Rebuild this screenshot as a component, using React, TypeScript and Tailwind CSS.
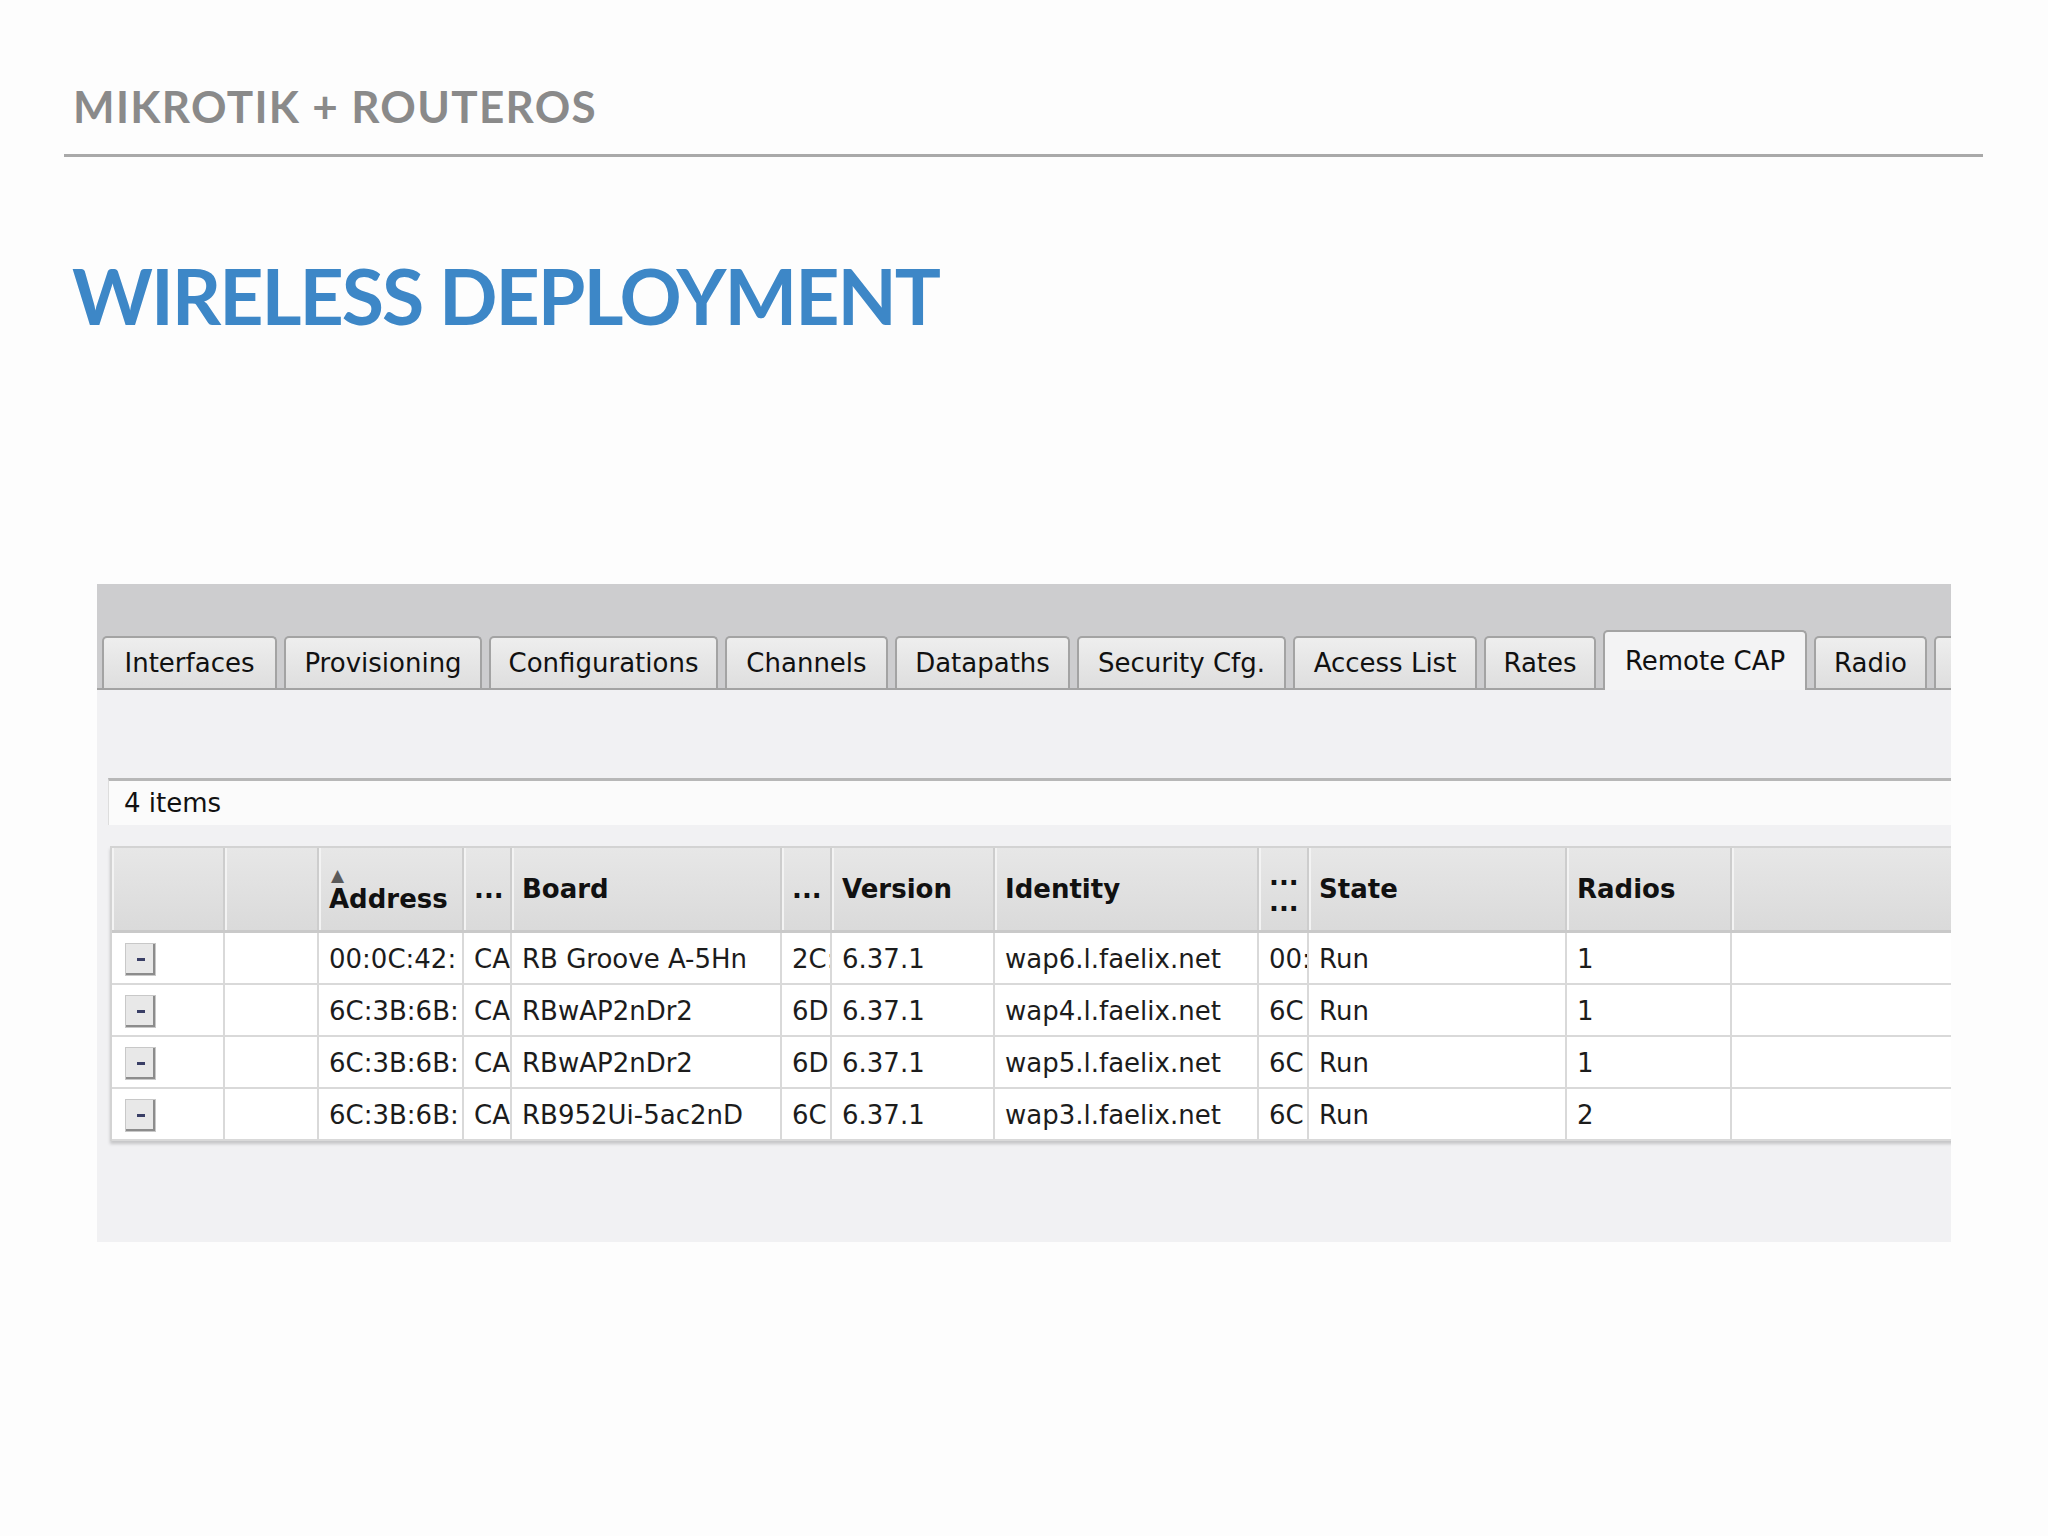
import React from 'react';

// WebFig "Remote CAP" tab strip
const tabs = [
  { label: 'Interfaces', w: 'w-[175px]' },
  { label: 'Provisioning', w: 'w-[198px]' },
  { label: 'Configurations', w: 'w-[229px]' },
  { label: 'Channels', w: 'w-[163px]' },
  { label: 'Datapaths', w: 'w-[175px]' },
  { label: 'Security Cfg.', w: 'w-[209px]' },
  { label: 'Access List', w: 'w-[184px]' },
  { label: 'Rates', w: 'w-[112px]' },
  { label: 'Remote CAP', w: 'w-[204px]', active: true },
  { label: 'Radio', w: 'w-[113px]' },
  { label: '', w: 'w-[60px]' },
];

// columns are narrow in the original, values are cut at the cell edge
const rows = [
  ['00:0C:42:', 'CA', 'RB Groove A-5Hn', '2C:', '6.37.1', 'wap6.l.faelix.net', '00:', 'Run', '1'],
  ['6C:3B:6B:', 'CA', 'RBwAP2nDr2', '6D', '6.37.1', 'wap4.l.faelix.net', '6C', 'Run', '1'],
  ['6C:3B:6B:', 'CA', 'RBwAP2nDr2', '6D', '6.37.1', 'wap5.l.faelix.net', '6C', 'Run', '1'],
  ['6C:3B:6B:', 'CA', 'RB952Ui-5ac2nD', '6C', '6.37.1', 'wap3.l.faelix.net', '6C', 'Run', '2'],
];

const cols =
  'grid grid-cols-[113px_94px_145px_48px_270px_50px_163px_264px_50px_258px_165px_400px]';

const headCell =
  'flex h-[82px] items-center border-r-2 border-[#cdcdcd] bg-gradient-to-b from-[#e7e7e7] to-[#dadada] px-[10px] shadow-[inset_2px_0_0_#f3f3f3] font-bold text-[26px] text-[#111]';

const bodyCell =
  'flex h-[52px] items-center overflow-hidden whitespace-nowrap border-r-2 border-b-2 border-[#d9d9d9] bg-white pl-[10px] pt-[2px] text-[26px] text-[#1c1c1c]';

function MinusButton() {
  return (
    <div className="flex h-[33px] w-[31px] items-center justify-center border border-[#c8c8c8] bg-[#e8e8e8] shadow-[inset_-2px_-2px_0_#8c8c8c]">
      <div className="h-[3px] w-[8px] bg-[#3a3f66]" />
    </div>
  );
}

export default function App() {
  return (
    <div className="h-[1536px] w-[2048px] overflow-hidden bg-[#fdfdfd] font-['DejaVu_Sans',sans-serif]">
      {/* slide header */}
      <div className="pl-[73px] pt-[84px] font-['Lato',sans-serif] text-[44px] font-bold leading-none tracking-[0.03em] text-[#8a8a8a]">
        MIKROTIK + ROUTEROS
      </div>
      <div className="ml-[64px] mt-[26px] h-[3px] w-[1919px] bg-[#a9a9a9]" />
      <h1 className="ml-[72px] mt-[100px] font-['Lato',sans-serif] text-[77px] font-bold leading-none tracking-[-2px] text-[#3d87c7]">
        WIRELESS DEPLOYMENT
      </h1>

      {/* screenshot panel */}
      <div className="ml-[97px] mt-[250px] flex h-[658px] w-[1854px] flex-col overflow-hidden">
        <div className="flex h-[106px] shrink-0 items-end gap-[7px] border-b-2 border-[#a3a3a3] bg-[#cdcdcf] pl-[5px]">
          {tabs.map((t, i) =>
            t.active ? (
              <div
                key={i}
                className={`relative -mb-[2px] flex h-[60px] shrink-0 items-center justify-center rounded-t-[5px] border-2 border-b-0 border-[#a3a3a3] bg-[#f3f3f4] text-[26px] text-[#111] ${t.w}`}
              >
                {t.label}
              </div>
            ) : (
              <div
                key={i}
                className={`flex h-[52px] shrink-0 items-center justify-center rounded-t-[5px] border-2 border-b-0 border-[#a3a3a3] bg-gradient-to-b from-[#eeeeee] to-[#dedede] text-[26px] text-[#111] ${t.w}`}
              >
                {t.label}
              </div>
            )
          )}
        </div>

        <div className="flex-1 bg-[#f1f1f3] pl-[11px] pt-[88px]">
          <div className="flex h-[47px] items-center border-l border-t-[3px] border-[#b7b7b7] border-l-[#dddddd] bg-[#fbfbfb] pl-[15px] text-[26px] text-[#111]">
            4 items
          </div>

          {/* remote cap table */}
          <div className="ml-[2px] mt-[21px] w-[1900px] border-l-2 border-t-2 border-[#d3d3d3] shadow-[0_3px_3px_rgba(0,0,0,0.18)]">
            <div className={`${cols} border-b-[3px] border-[#c9c9c9]`}>
              <div className={headCell} />
              <div className={headCell} />
              <div className={`${headCell} flex-col items-start justify-center`}>
                <span className="pl-[2px] text-[17px] leading-[20px] text-[#5a5a5a]">▲</span>
                <span className="leading-[28px]">Address</span>
              </div>
              <div className={`${headCell} px-[8px]`}>...</div>
              <div className={headCell}>Board</div>
              <div className={`${headCell} px-[8px]`}>...</div>
              <div className={headCell}>Version</div>
              <div className={headCell}>Identity</div>
              <div className={`${headCell} flex-col items-start justify-center gap-[2px] px-[8px] leading-[24px]`}>
                <span>...</span>
                <span>...</span>
              </div>
              <div className={headCell}>State</div>
              <div className={headCell}>Radios</div>
              <div className={headCell} />
            </div>

            {rows.map((r, i) => (
              <div key={i} className={cols}>
                <div className={`${bodyCell} pl-[13px] pt-0`}>
                  <MinusButton />
                </div>
                <div className={bodyCell} />
                {r.map((v, j) => (
                  <div key={j} className={bodyCell}>
                    {v}
                  </div>
                ))}
                <div className={bodyCell} />
              </div>
            ))}
          </div>
        </div>
      </div>
    </div>
  );
}
